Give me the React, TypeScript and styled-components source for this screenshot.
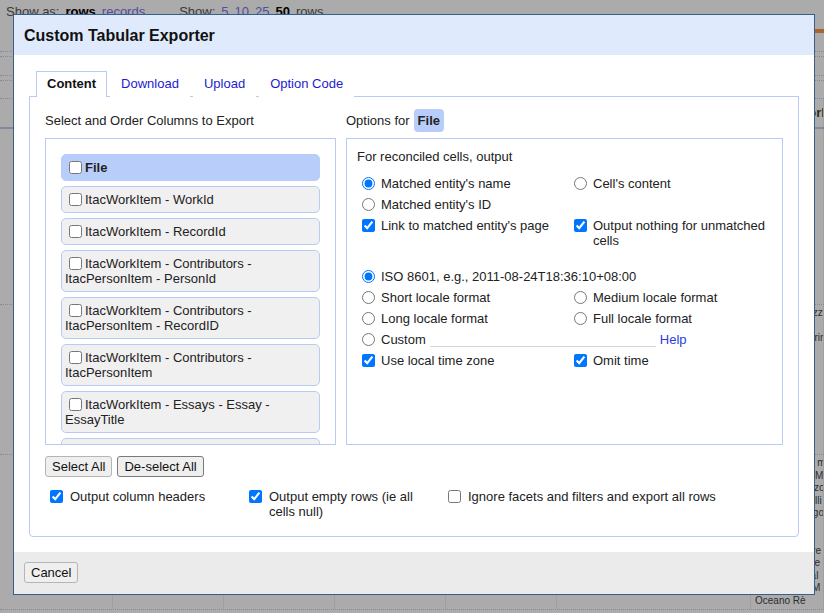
import styled, { createGlobalStyle } from 'styled-components'

const GlobalStyle = createGlobalStyle`
  html, body { margin: 0; padding: 0; }
  body {
    font-family: "Liberation Sans", Arial, sans-serif;
    font-size: 13px;
    line-height: 15px;
    color: #222;
  }
`

const Page = styled.div`
  position: relative;
  width: 824px;
  height: 613px;
  overflow: hidden;
  background: #fff;
`

// ---- the project page behind the modal ----

const ViewBar = styled.div`
  display: flex;
  align-items: center;
  height: 22px;
  padding: 0 6px;
  color: #585858;
`

const ViewGroup = styled.span`
  display: flex;
  gap: 6px;
  & + & { margin-left: 34px; }
`

const ViewOption = styled.span<{ $active?: boolean }>`
  color: ${p => (p.$active ? '#000' : '#7a74f5')};
  font-weight: ${p => (p.$active ? 'bold' : 'normal')};
`

const ProgressRow = styled.div`
  display: flex;
  justify-content: flex-end;
  align-items: flex-end;
  height: 11px;
`

const ProgressBit = styled.div`
  width: 14px;
  height: 4px;
  background: #ff9442;
`

const Band = styled.div<{ $h: number }>`
  height: ${p => p.$h}px;
  border-bottom: 1px dotted #c9c9f0;
`

const SheetRow = styled.div<{ $h?: number; $head?: boolean }>`
  display: grid;
  grid-template-columns: 113px 111px 111px 111px 111px 194px 73px;
  height: ${p => (p.$h ? `${p.$h}px` : 'auto')};
  border-bottom: ${p => (p.$head ? '2px solid #c3cbee' : '1px dotted #c9c9f0')};
  font-weight: ${p => (p.$head ? 'bold' : 'normal')};
`

const SheetCell = styled.div<{ $small?: boolean }>`
  border-right: 1px solid #eeeeee;
  padding: ${p => (p.$small ? '2px 4px' : '6px 4px')};
  font-size: ${p => (p.$small ? '10px' : '13px')};
  line-height: ${p => (p.$small ? '12.5px' : '15px')};
  white-space: nowrap;
  overflow: hidden;
  color: #444;
`

const Shade = styled.div`
  position: absolute;
  inset: 0;
  background: rgba(0, 0, 0, 0.33);
`

// ---- dialog ----

const Dialog = styled.div`
  position: absolute;
  left: 13px;
  top: 14px;
  width: 800px;
  height: 579px;
  border: 1px solid #3a5f87;
  background: #fff;
  display: flex;
  flex-direction: column;
`

const DialogHeader = styled.div`
  height: 40px;
  flex: none;
  display: flex;
  align-items: center;
  padding: 0 10px;
  background: #dfebfc;
  font-size: 16px;
  font-weight: bold;
  color: #111;
`

const DialogBody = styled.div`
  flex: 1;
  display: flex;
  flex-direction: column;
  padding: 16px 15px 15px;
  min-height: 0;
`

const DialogFooter = styled.div`
  height: 42px;
  flex: none;
  box-sizing: border-box;
  padding: 10px;
  background: #ebebeb;
`

const TabList = styled.div`
  display: flex;
  padding-left: 7px;
  margin-bottom: -1px;
  position: relative;
  z-index: 1;
`

const Tab = styled.div<{ $active?: boolean }>`
  height: 26px;
  box-sizing: border-box;
  padding: 0 10px 2px;
  margin-right: 3px;
  line-height: 23px;
  border: 1px solid ${p => (p.$active ? '#b7cbf5' : 'transparent')};
  border-bottom: 0;
  background: #fff;
  color: ${p => (p.$active ? '#111' : '#1c1cd0')};
  font-weight: ${p => (p.$active ? 'bold' : 'normal')};
`

const TabPanel = styled.div`
  flex: 1;
  border: 1px solid #b7cbf5;
  border-radius: 0 0 4px 4px;
  padding: 11px 15px 15px;
`

const Columns = styled.div`
  display: grid;
  grid-template-columns: 291px 437px;
  gap: 10px;
`

const Heading = styled.div`
  height: 24px;
  margin-bottom: 6px;
  display: flex;
  align-items: center;
`

const Chip = styled.span`
  margin-left: 4px;
  padding: 4px;
  border-radius: 4px;
  background: #b9cdfb;
  font-weight: bold;
`

const ColumnList = styled.div`
  height: 307px;
  box-sizing: border-box;
  border: 1px solid #b7cbf5;
  padding: 15px 15px 0;
  overflow: hidden;
  display: flex;
  flex-direction: column;
  gap: 5px;
`

const ColumnItem = styled.div<{ $selected?: boolean }>`
  flex: none;
  min-height: 15px;
  padding: 5px 3px;
  border: 1px solid ${p => (p.$selected ? '#b9cdfb' : '#b9cbf3')};
  border-radius: 5px;
  background: ${p => (p.$selected ? '#b9cdfb' : '#f0f0f0')};
  font-weight: ${p => (p.$selected ? 'bold' : 'normal')};
`

const ItemCheck = styled.input.attrs({ type: 'checkbox' })`
  width: 13px;
  height: 13px;
  margin: 0 3px 0 4px;
  vertical-align: -2px;
`

const OptionsBox = styled.div`
  height: 307px;
  box-sizing: border-box;
  border: 1px solid #b7cbf5;
  padding: 10px;
`

const OptionGrid = styled.div<{ $gap: number }>`
  display: grid;
  grid-template-columns: 212px 1fr;
  margin-top: ${p => p.$gap}px;
`

const Choice = styled.label<{ $span?: boolean }>`
  display: flex;
  align-items: flex-start;
  height: ${p => (p.$span ? '21px' : 'auto')};
  box-sizing: border-box;
  padding: 3px 0;
  grid-column: ${p => (p.$span ? '1 / -1' : 'auto')};
`

const Radio = styled.input.attrs({ type: 'radio' })`
  flex: none;
  width: 13px;
  height: 13px;
  margin: 1px 6px 0 5px;
`

const Check = styled.input.attrs({ type: 'checkbox' })`
  flex: none;
  width: 13px;
  height: 13px;
  margin: 1px 6px 0 5px;
`

const FormatInput = styled.input`
  width: 226px;
  height: 15px;
  box-sizing: border-box;
  margin: 0 4px 0 4px;
  padding: 0;
  border: 0;
  border-bottom: 1px solid #d4d4d4;
  background: transparent;
  font: inherit;
  outline: none;
`

const HelpLink = styled.a`
  color: #2a3ddf;
  text-decoration: none;
`

const ButtonRow = styled.div`
  display: flex;
  gap: 5px;
  margin-top: 11px;
`

const Button = styled.button<{ $dark?: boolean }>`
  height: 21px;
  padding: 0 6px;
  border: 1px solid ${p => (p.$dark ? '#7a7a7a' : '#b5b5b5')};
  border-radius: 3px;
  background: #efefef;
  font-family: "Liberation Sans", Arial, sans-serif;
  font-size: 13px;
  color: #111;
`

const ExportChecks = styled.div`
  display: grid;
  grid-template-columns: 199px 199px 1fr;
  margin-top: 12px;
`

const ExportCheck = styled.label`
  display: flex;
  align-items: flex-start;
  padding-right: 8px;
`

const ExportBox = styled.input.attrs({ type: 'checkbox' })`
  flex: none;
  width: 13px;
  height: 13px;
  margin: 1px 7px 0 5px;
`

const columns = [
  'ItacWorkItem - WorkId',
  'ItacWorkItem - RecordId',
  'ItacWorkItem - Contributors - ItacPersonItem - PersonId',
  'ItacWorkItem - Contributors - ItacPersonItem - RecordID',
  'ItacWorkItem - Contributors - ItacPersonItem',
  'ItacWorkItem - Essays - Essay - EssayTitle',
]

const sheetRows = [
  { h: 175, lines: ['Carta'] },
  { h: 149, lines: ['Veduta di piazza', 'del Duomo', 'Ritratto di Marin', "Ritratto di d'A"] },
  {
    h: 0,
    lines: [
      'Carta nautica ma',
      'Isole del Mar M',
      'Porto di Livorzo',
      'Veduta Castelli',
      'Paesaggio lago',
      'Mappa delle',
      '',
      'Carta del Mare',
      'Descrizione lie',
      'Porti del canal',
      "dell'isole del M",
      'Oceano Rè',
    ],
  },
]

export default function App() {
  return (
    <Page>
      <GlobalStyle />

      <ViewBar>
        <ViewGroup>
          <span>Show as:</span>
          <ViewOption $active>rows</ViewOption>
          <ViewOption>records</ViewOption>
        </ViewGroup>
        <ViewGroup>
          <span>Show:</span>
          <ViewOption>5</ViewOption>
          <ViewOption>10</ViewOption>
          <ViewOption>25</ViewOption>
          <ViewOption $active>50</ViewOption>
          <span>rows</span>
        </ViewGroup>
      </ViewBar>
      <ProgressRow>
        <ProgressBit />
      </ProgressRow>
      <Band $h={18} />
      <Band $h={4} />
      <Band $h={18} />
      <Band $h={4} />
      <Band $h={17} />
      <SheetRow $head $h={28}>
        <SheetCell />
        <SheetCell />
        <SheetCell />
        <SheetCell />
        <SheetCell />
        <SheetCell />
        <SheetCell>Essay Work</SheetCell>
      </SheetRow>
      {sheetRows.map((row, i) => (
        <SheetRow key={i} $h={row.h || undefined}>
          <SheetCell />
          <SheetCell />
          <SheetCell />
          <SheetCell />
          <SheetCell />
          <SheetCell />
          <SheetCell $small>
            {row.lines.map((l, j) => (
              <div key={j}>{l || '\u00a0'}</div>
            ))}
          </SheetCell>
        </SheetRow>
      ))}

      <Shade />

      <Dialog>
        <DialogHeader>Custom Tabular Exporter</DialogHeader>
        <DialogBody>
          <TabList>
            <Tab $active>Content</Tab>
            <Tab>Download</Tab>
            <Tab>Upload</Tab>
            <Tab>Option Code</Tab>
          </TabList>
          <TabPanel>
            <Columns>
              <div>
                <Heading>Select and Order Columns to Export</Heading>
                <ColumnList>
                  <ColumnItem $selected>
                    <ItemCheck />File
                  </ColumnItem>
                  {columns.map(c => (
                    <ColumnItem key={c}>
                      <ItemCheck />
                      {c}
                    </ColumnItem>
                  ))}
                  <ColumnItem />
                </ColumnList>
              </div>
              <div>
                <Heading>
                  Options for <Chip>File</Chip>
                </Heading>
                <OptionsBox>
                  <div>For reconciled cells, output</div>
                  <OptionGrid $gap={9}>
                    <Choice>
                      <Radio name="recon" defaultChecked />
                      Matched entity's name
                    </Choice>
                    <Choice>
                      <Radio name="recon" />
                      Cell's content
                    </Choice>
                    <Choice>
                      <Radio name="recon" />
                      Matched entity's ID
                    </Choice>
                    <span />
                    <Choice>
                      <Check defaultChecked />
                      Link to matched entity's page
                    </Choice>
                    <Choice>
                      <Check defaultChecked />
                      Output nothing for unmatched cells
                    </Choice>
                  </OptionGrid>
                  <OptionGrid $gap={15}>
                    <Choice $span>
                      <Radio name="date" defaultChecked />
                      ISO 8601, e.g., 2011-08-24T18:36:10+08:00
                    </Choice>
                    <Choice>
                      <Radio name="date" />
                      Short locale format
                    </Choice>
                    <Choice>
                      <Radio name="date" />
                      Medium locale format
                    </Choice>
                    <Choice>
                      <Radio name="date" />
                      Long locale format
                    </Choice>
                    <Choice>
                      <Radio name="date" />
                      Full locale format
                    </Choice>
                    <Choice $span>
                      <Radio name="date" />
                      Custom
                      <FormatInput />
                      <HelpLink href="#">Help</HelpLink>
                    </Choice>
                    <Choice>
                      <Check defaultChecked />
                      Use local time zone
                    </Choice>
                    <Choice>
                      <Check defaultChecked />
                      Omit time
                    </Choice>
                  </OptionGrid>
                </OptionsBox>
              </div>
            </Columns>
            <ButtonRow>
              <Button>Select All</Button>
              <Button $dark>De-select All</Button>
            </ButtonRow>
            <ExportChecks>
              <ExportCheck>
                <ExportBox defaultChecked />
                Output column headers
              </ExportCheck>
              <ExportCheck>
                <ExportBox defaultChecked />
                Output empty rows (ie all cells null)
              </ExportCheck>
              <ExportCheck>
                <ExportBox />
                Ignore facets and filters and export all rows
              </ExportCheck>
            </ExportChecks>
          </TabPanel>
        </DialogBody>
        <DialogFooter>
          <Button>Cancel</Button>
        </DialogFooter>
      </Dialog>
    </Page>
  )
}
